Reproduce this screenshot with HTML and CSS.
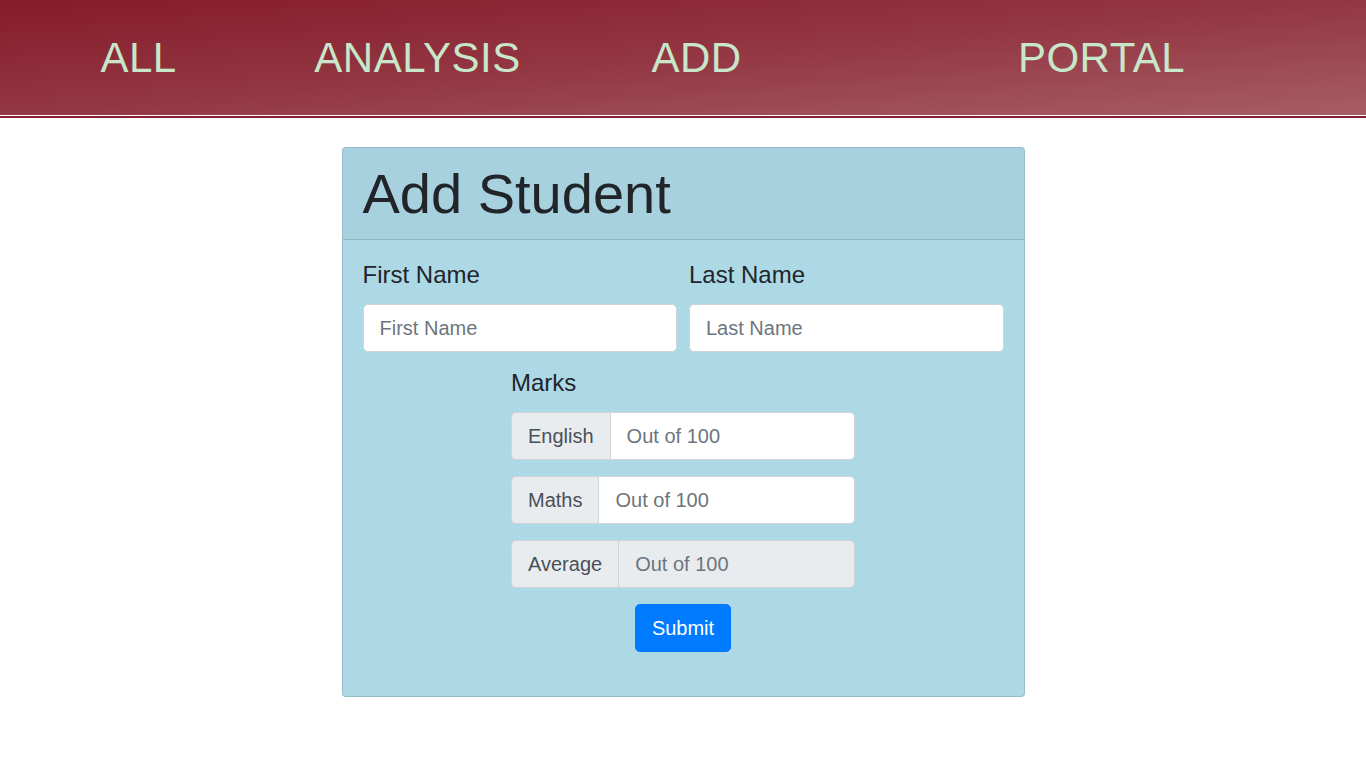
FILE: index.html
```html
<!DOCTYPE html>
<html lang="en">
<head>
<meta charset="utf-8">
<title>Add Student</title>
<link rel="stylesheet" href="styles.css">
</head>
<body>
<header class="topbar">
  <nav class="nav">
    <a class="nav-link" href="#">ALL</a>
    <a class="nav-link" href="#">ANALYSIS</a>
    <a class="nav-link" href="#">ADD</a>
    <a class="nav-link nav-portal" href="#">PORTAL</a>
  </nav>
</header>
<div class="rule"></div>

<main class="card">
  <div class="card-header">
    <h1 class="title">Add Student</h1>
  </div>
  <form class="card-body">
    <div class="name-row">
      <div class="field">
        <label class="label" for="fn">First Name</label>
        <input class="control" id="fn" type="text" placeholder="First Name">
      </div>
      <div class="field">
        <label class="label" for="ln">Last Name</label>
        <input class="control" id="ln" type="text" placeholder="Last Name">
      </div>
    </div>

    <div class="marks">
      <label class="label">Marks</label>
      <div class="group">
        <span class="addon">English</span>
        <input class="control group-control" type="text" placeholder="Out of 100">
      </div>
      <div class="group">
        <span class="addon">Maths</span>
        <input class="control group-control" type="text" placeholder="Out of 100">
      </div>
      <div class="group">
        <span class="addon">Average</span>
        <input class="control group-control readonly" type="text" placeholder="Out of 100" readonly>
      </div>
    </div>

    <div class="actions">
      <button class="btn" type="button">Submit</button>
    </div>
  </form>
</main>
</body>
</html>
```

FILE: styles.css
```css
* { box-sizing: border-box; }

html, body {
  margin: 0;
  padding: 0;
  background: #ffffff;
  font-family: "Liberation Sans", Arial, sans-serif;
  color: #212529;
}

.topbar {
  height: 115px;
  background: linear-gradient(to bottom right, #851b29 0%, #933743 50%, #a75d64 100%);
  padding-top: 34px;
}

.nav {
  display: flex;
  align-items: flex-start;
}

.nav-link {
  display: block;
  width: 279px;
  text-align: center;
  font-size: 42px;
  line-height: 48px;
  letter-spacing: 0.5px;
  color: #c8e6c9;
  text-decoration: none;
}

.nav-link:first-child { margin-left: -1px; }

.nav-portal { margin-left: 126px; }

.rule {
  height: 2px;
  margin-top: 1px;
  background: #8b1e2d;
}

.card {
  width: 683px;
  margin: 29px auto 0;
  background: #add8e6;
  border: 1px solid rgba(0, 0, 0, 0.125);
  border-radius: 4px;
}

.card-header {
  padding: 12px 20px;
  background: rgba(0, 0, 0, 0.03);
  border-bottom: 1px solid rgba(0, 0, 0, 0.125);
  border-radius: 3px 3px 0 0;
}

.title {
  margin: 0;
  font-size: 56px;
  font-weight: 400;
  line-height: 1.2;
}

.card-body {
  padding: 20px 20px 44px;
  margin: 0;
}

.name-row {
  display: grid;
  grid-template-columns: 1fr 1fr;
  column-gap: 12px;
  margin-bottom: 16px;
}

.field {
  display: flex;
  flex-direction: column;
}

.label {
  display: block;
  font-size: 24px;
  line-height: 30px;
  margin-bottom: 14px;
}

.control {
  display: block;
  width: 100%;
  height: 48px;
  padding: 8px 16px;
  font-family: "Liberation Sans", Arial, sans-serif;
  font-size: 20px;
  line-height: 1.5;
  color: #495057;
  background: #ffffff;
  border: 1px solid #ced4da;
  border-radius: 4.8px;
  outline: none;
}

.control::placeholder { color: #6c757d; opacity: 1; }

.marks {
  width: 344px;
  margin: 0 auto;
}

.group {
  display: flex;
  align-items: stretch;
  margin-bottom: 16px;
}

.addon {
  display: flex;
  align-items: center;
  padding: 8px 16px;
  font-size: 20px;
  line-height: 1.5;
  color: #495057;
  background: #e9ecef;
  border: 1px solid #ced4da;
  border-radius: 4.8px 0 0 4.8px;
  white-space: nowrap;
}

.group-control {
  flex: 1 1 auto;
  width: 1%;
  margin-left: -1px;
  border-radius: 0 4.8px 4.8px 0;
}

.readonly { background: #e9ecef; }

.actions {
  text-align: center;
}

.btn {
  display: inline-block;
  height: 48px;
  padding: 8px 16px;
  font-family: "Liberation Sans", Arial, sans-serif;
  font-size: 20px;
  line-height: 1.5;
  color: #ffffff;
  background: #007bff;
  border: 1px solid #007bff;
  border-radius: 4.8px;
  cursor: pointer;
}
```
